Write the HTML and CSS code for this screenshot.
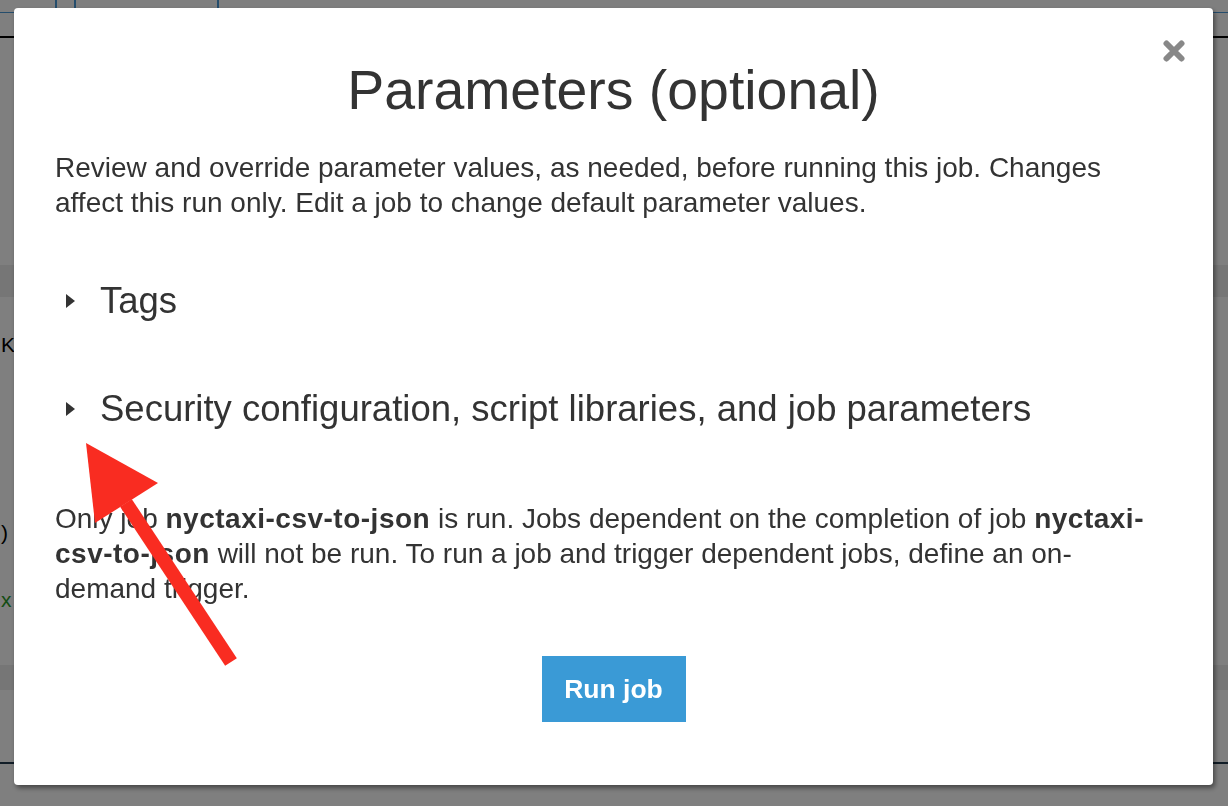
FILE: index.html
```html
<!DOCTYPE html>
<html>
<head>
<meta charset="utf-8">
<link rel="stylesheet" href="styles.css">
</head>
<body>
<div class="page">
  <div class="topbar">
    <span class="tab t1"></span><span class="tab t2"></span><span class="tab t3"></span>
  </div>
  <div class="rule"></div>
  <div class="band b1"></div>
  <div class="frag k">K</div>
  <div class="frag paren">)</div>
  <div class="frag green">x</div>
  <div class="band b2"></div>
  <div class="rule2"></div>
</div>
<div class="backdrop"></div>
<div class="modal">
  <button class="close" aria-label="Close">
    <svg width="22" height="22" viewBox="0 0 22 22"><path d="M3.5 3.5 L18.5 18.5 M18.5 3.5 L3.5 18.5" stroke="#888" stroke-width="6" stroke-linecap="round"/></svg>
  </button>
  <h1 class="title">Parameters (optional)</h1>
  <p class="intro">Review and override parameter values, as needed, before running this job. Changes affect this run only. Edit a job to change default parameter values.</p>
  <div class="section first"><span class="caret"></span><span class="label">Tags</span></div>
  <div class="section"><span class="caret"></span><span class="label">Security configuration, script libraries, and job parameters</span></div>
  <p class="note">Only job <b>nyctaxi-csv-to-json</b> is run. Jobs dependent on the completion of job <b>nyctaxi-csv-to-json</b> will not be run. To run a job and trigger dependent jobs, define an on-demand trigger.</p>
  <div class="actions"><button class="run">Run job</button></div>
</div>
<svg class="arrow" width="1228" height="806" viewBox="0 0 1228 806">
  <line x1="126" y1="503" x2="231" y2="662" stroke="#f92c21" stroke-width="14"/>
  <polygon points="86,443 158,483 95,523" fill="#f92c21"/>
</svg>
</body>
</html>
```
FILE: styles.css
```css
html, body {
  margin: 0;
  padding: 0;
}
body {
  width: 1228px;
  height: 806px;
  overflow: hidden;
  font-family: "Liberation Sans", Arial, sans-serif;
  background: #fff;
  position: relative;
}
.page {
  height: 806px;
  position: relative;
}
.topbar {
  height: 12px;
  border-bottom: 1px solid #4a9ad8;
  position: relative;
}
.tab {
  position: absolute;
  top: 0;
  width: 2px;
  height: 12px;
  background: #4a9ad8;
}
.t1 { left: 55px; }
.t2 { left: 74px; }
.t3 { left: 217px; }
.rule {
  margin-top: 23px;
  height: 2px;
  background: #000;
}
.band {
  background: #ececec;
}
.b1 { margin-top: 227px; height: 32px; }
.frag {
  font-size: 21px;
  line-height: 24px;
  color: #000;
  padding-left: 1px;
}
.k { margin-top: 36px; }
.paren { margin-top: 164px; }
.green { margin-top: 43px; color: #2a9a2a; }
.b2 { margin-top: 53px; height: 25px; }
.rule2 {
  margin-top: 72px;
  height: 2px;
  background: #233a4f;
}
.backdrop {
  position: fixed;
  inset: 0;
  background: rgba(0, 0, 0, 0.5);
}
.modal {
  position: fixed;
  left: 14px;
  top: 8px;
  width: 1199px;
  height: 777px;
  box-sizing: border-box;
  padding: 49px 55px 0 41px;
  background: #fff;
  border-radius: 4px;
  box-shadow: 2px 3px 5px rgba(0, 0, 0, 0.45);
  color: #333;
}
.close {
  position: absolute;
  top: 32px;
  left: 1149px;
  background: none;
  border: 0;
  padding: 0;
  width: 22px;
  height: 22px;
  cursor: pointer;
}
.close svg { display: block; }
.title {
  margin: 0 -14px 0 0;
  text-align: center;
  font-size: 55.4px;
  font-weight: normal;
  line-height: 66px;
  color: #333;
}
.intro {
  margin: 27px 0 0;
  font-size: 28px;
  line-height: 35px;
}
.section {
  display: flex;
  align-items: center;
  height: 44px;
  margin-top: 64px;
}
.section.first { margin-top: 59px; }
.caret {
  width: 0;
  height: 0;
  margin-left: 11px;
  margin-right: 25px;
  border-left: 9px solid #333;
  border-top: 7px solid transparent;
  border-bottom: 7px solid transparent;
}
.label {
  font-size: 36.5px;
  line-height: 44px;
  white-space: nowrap;
}
.note {
  margin: 70px 0 0;
  font-size: 28px;
  line-height: 35px;
}
.note b {
  font-weight: bold;
  letter-spacing: 0.5px;
}
.actions {
  display: flex;
  justify-content: center;
  margin-right: -14px;
  margin-top: 50px;
}
.run {
  width: 144px;
  height: 66px;
  border: 0;
  background: #3a9ad6;
  color: #fff;
  font-family: "Liberation Sans", Arial, sans-serif;
  font-size: 26.5px;
  font-weight: bold;
  padding: 0;
}
.arrow {
  position: fixed;
  left: 0;
  top: 0;
  pointer-events: none;
}
```
